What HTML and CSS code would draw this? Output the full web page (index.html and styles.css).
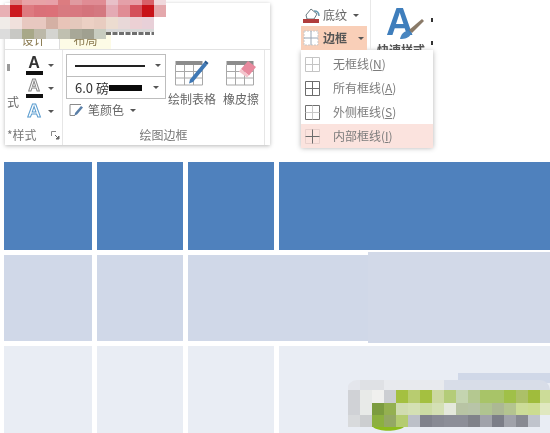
FILE: index.html
```html
<!DOCTYPE html>
<html lang="zh">
<head>
<meta charset="utf-8">
<title>内部框线</title>
<link rel="stylesheet" href="styles.css">
</head>
<body>
<div class="page">
  <header class="top">
    <section class="ribbon">
      <div class="tabs">
        <div class="tab tab-active">设计</div>
        <div class="tab tab-layout">布局</div>
      </div>
      <div class="ribbon-body">
        <div class="group group-style">
          <div class="group-top style-top">
            <div class="style-word"><i class="style-mark"></i><span>式</span></div>
            <div class="wordart">
              <div class="wa-row"><span class="wa-a"><span class="wa-letter">A</span><i class="wa-bar"></i></span><i class="caret"></i></div>
              <div class="wa-row"><span class="wa-a"><span class="wa-letter wa-outline">A</span><i class="wa-bar"></i></span><i class="caret"></i></div>
              <div class="wa-row"><span class="wa-a"><span class="wa-letter wa-glow">A</span></span><i class="caret"></i></div>
            </div>
          </div>
          <div class="group-label style-label">
            <span>*样式</span>
            <svg class="launcher" width="9" height="9" viewBox="0 0 9 9"><path d="M.5 5V.5H5" fill="none" stroke="#888"/><path d="M4 4l3 3M8 5v3H5z" stroke="#666" fill="#666"/></svg>
          </div>
        </div>
        <div class="group group-draw">
          <div class="group-top draw-top">
            <div class="line-col">
              <div class="line-box"><i class="line-thin"></i><i class="caret"></i></div>
              <div class="line-box line-box-2"><span class="pt">6.0 磅</span><i class="line-thick"></i><i class="caret"></i></div>
              <div class="pen-row">
                <svg width="16" height="14" viewBox="0 0 16 14"><path d="M6 12.500H1V1.500h11" fill="none" stroke="#8a8a8a"/><path d="M6 10l6-7 2 1.500-6 7-2.500 1z" fill="#5a7fa8"/></svg>
                <span>笔颜色</span><i class="caret"></i>
              </div>
            </div>
            <div class="tool tool-draw">
              <svg width="34" height="27" viewBox="0 0 34 27"><rect x=".5" y="2" width="27" height="4" fill="#8c8c8c"/><path d="M.5 6v20h27V6M.5 12.500h27M.5 19h27M9.500 6v20M18.500 6v20" fill="none" stroke="#a8a8a8"/><path d="M15 20.500L29 3.500l3 2.500-14 17-4 1.500z" fill="#3f78b5"/><path d="M29 3.500l1.500-2 3 2.500-1.500 2z" fill="#2a5a90"/></svg>
              <span>绘制表格</span>
            </div>
            <div class="tool tool-erase">
              <svg width="31" height="27" viewBox="0 0 31 27"><rect x=".5" y="2" width="27" height="4" fill="#8c8c8c"/><path d="M.5 6v20h27V6M.5 12.500h27M.5 19h27M9.500 6v20M18.500 6v20" fill="none" stroke="#a8a8a8"/><path d="M15 10l7-8 8 6-7 8.500z" fill="#e88a9e"/><path d="M15 10l8 6.500-2 2-8-6z" fill="#f4c4cc"/></svg>
              <span>橡皮擦</span>
            </div>
          </div>
          <div class="group-label">绘图边框</div>
        </div>
      </div>
    </section>
    <section class="side">
      <div class="side-top">
        <div class="side-left">
          <div class="shade-row">
            <svg width="17" height="18" viewBox="0 0 17 18"><path d="M3 9l5-6 6 5-3 5H4z" fill="#fff" stroke="#6a7a80"/><path d="M11 5c3 0 5 2 5 5" fill="none" stroke="#6a9ab0" stroke-width="1.500"/><rect y="13" width="16" height="4" fill="#b03c3c"/></svg>
            <span>底纹</span><i class="caret"></i>
          </div>
          <div class="border-row">
            <svg width="16" height="16" viewBox="0 0 16 16"><path d="M1 1h14v14H1z" fill="#fff" stroke="#c8c8c8" stroke-dasharray="2 1"/><path d="M8 1v14M1 8h14" stroke="#9aa6b4"/></svg>
            <b>边框</b><i class="caret"></i>
          </div>
        </div>
        <div class="quick">
          <div class="quick-icon">
            <span class="quick-a">A</span>
            <svg class="brush" width="26" height="22" viewBox="0 0 26 22"><path d="M1 21c1-5 4-8 8-8l3 3c-2 4-6 5-11 5z" fill="#4a86c0"/><path d="M10 12L23 1l2 2-12 12z" fill="#8a7a68"/></svg>
          </div>
          <div class="quick-label">快速样式</div>
        </div>
        <div class="dots"><i></i><i></i></div>
      </div>
      <ul class="menu">
        <li class="item">
          <svg width="15" height="15" viewBox="0 0 15 15"><path d="M.5.500h14v14H.5zM7.500.5v14M.5 7.500h14" fill="none" stroke="#c4c4c4"/></svg>
          <span>无框线(<u>N</u>)</span>
        </li>
        <li class="item">
          <svg width="15" height="15" viewBox="0 0 15 15"><path d="M.5.500h14v14H.5zM7.500.5v14M.5 7.500h14" fill="none" stroke="#6c6c6c"/></svg>
          <span>所有框线(<u>A</u>)</span>
        </li>
        <li class="item">
          <svg width="15" height="15" viewBox="0 0 15 15"><path d="M.5.500h14v14H.5z" fill="none" stroke="#707070"/><path d="M7.500.5v14M.5 7.500h14" fill="none" stroke="#c8c8c8"/></svg>
          <span>外侧框线(<u>S</u>)</span>
        </li>
        <li class="item item-on">
          <svg width="15" height="15" viewBox="0 0 15 15"><path d="M.5.500h14v14H.5z" fill="none" stroke="#e8d0cc"/><path d="M7.500.5v14M.5 7.500h14" fill="none" stroke="#6c6c6c"/></svg>
          <span>内部框线(<u>I</u>)</span>
        </li>
      </ul>
    </section>
  </header>

  <main class="sheet">
    <div class="cell head"></div><div class="cell head"></div><div class="cell head"></div><div class="cell head"></div>
    <div class="cell mid"></div><div class="cell mid"></div><div class="cell mid span2"></div>
    <div class="cell low"></div><div class="cell low"></div><div class="cell low"></div><div class="cell low"></div>
  </main>

  <div class="patch patch-mid"></div>
  <div class="patch patch-low"></div>

  <svg class="mosaic mosaic-top" width="170" height="42" viewBox="0 0 170 42">
    <rect x="10" y="0" width="12" height="5" fill="#e08a8a"/><rect x="22" y="0" width="24" height="5" fill="#e8a2a6"/><rect x="46" y="0" width="12" height="5" fill="#e8a0a8"/><rect x="58" y="0" width="12" height="5" fill="#dc7c80"/><rect x="70" y="0" width="12" height="5" fill="#e09aa0"/><rect x="82" y="0" width="24" height="5" fill="#e08c94"/><rect x="106" y="0" width="12" height="5" fill="#e8c0c8"/><rect x="118" y="0" width="12" height="5" fill="#e4a0a8"/><rect x="130" y="0" width="12" height="5" fill="#e8a0a8"/><rect x="142" y="0" width="12" height="5" fill="#d86068"/><rect x="154" y="0" width="12" height="5" fill="#f0d8dc"/>
    <rect x="0" y="5" width="10" height="12" fill="#e8b0b4"/><rect x="10" y="5" width="12" height="12" fill="#cc1a20"/><rect x="22" y="5" width="12" height="12" fill="#de7a80"/><rect x="34" y="5" width="12" height="12" fill="#da7078"/><rect x="46" y="5" width="12" height="12" fill="#dc7078"/><rect x="58" y="5" width="12" height="12" fill="#d87a80"/><rect x="70" y="5" width="12" height="12" fill="#d87880"/><rect x="82" y="5" width="12" height="12" fill="#d4747c"/><rect x="94" y="5" width="12" height="12" fill="#d47880"/><rect x="106" y="5" width="12" height="12" fill="#e4aab4"/><rect x="118" y="5" width="12" height="12" fill="#e08c94"/><rect x="130" y="5" width="12" height="12" fill="#d4505a"/><rect x="142" y="5" width="12" height="12" fill="#c81218"/><rect x="154" y="5" width="12" height="12" fill="#e4a8ac"/>
    <rect x="0" y="17" width="10" height="12" fill="#f0ece8"/><rect x="10" y="17" width="12" height="12" fill="#f0e0dc"/><rect x="22" y="17" width="24" height="12" fill="#e8c8c0"/><rect x="46" y="17" width="12" height="12" fill="#d4b0a4"/><rect x="58" y="17" width="12" height="12" fill="#e8c4b8"/><rect x="70" y="17" width="12" height="12" fill="#e4c8bc"/><rect x="82" y="17" width="12" height="12" fill="#ecd0c4"/><rect x="94" y="17" width="12" height="12" fill="#e8ccc0"/><rect x="106" y="17" width="12" height="12" fill="#ecdcd0"/><rect x="118" y="17" width="12" height="12" fill="#e8d8d8"/><rect x="130" y="17" width="12" height="12" fill="#ecd0d4"/><rect x="142" y="17" width="12" height="12" fill="#e8d0d8"/>
    <rect x="0" y="29" width="10" height="10" fill="#dcdcdc"/><rect x="10" y="29" width="12" height="10" fill="#c8c8c4"/><rect x="22" y="29" width="12" height="10" fill="#a8a888"/><rect x="34" y="29" width="12" height="10" fill="#bcb8a8"/><rect x="46" y="29" width="12" height="10" fill="#d4d4d0"/><rect x="58" y="29" width="12" height="10" fill="#c0c0b0"/><rect x="70" y="29" width="12" height="10" fill="#a8a898"/><rect x="82" y="29" width="12" height="10" fill="#a0a090"/><rect x="94" y="29" width="12" height="10" fill="#c8ccc0"/><rect x="106" y="29" width="48" height="3" fill="#d8d8d8"/>
    <path d="M106 33.500h48" stroke="#333" stroke-width="3" stroke-dasharray="5 1.500" opacity=".7"/>
  </svg>

  <svg class="mosaic mosaic-low" width="203" height="53" viewBox="0 0 203 53">
    <rect x="1" y="0" width="12" height="10" fill="#e4e6ec"/><rect x="13" y="0" width="24" height="10" fill="#dfe1e5"/><rect x="37" y="0" width="60" height="10" fill="#e8eaee"/><rect x="97" y="0" width="106" height="10" fill="#d8dde8"/>
    <rect x="1" y="10" width="12" height="13" fill="#d0d2d6"/><rect x="13" y="10" width="12" height="13" fill="#e8eae8"/><rect x="25" y="10" width="12" height="13" fill="#f0f0ee"/><rect x="37" y="10" width="12" height="13" fill="#ccced2"/><rect x="49" y="10" width="12" height="13" fill="#a4c040"/><rect x="61" y="10" width="12" height="13" fill="#b8cc70"/><rect x="73" y="10" width="12" height="13" fill="#a4c040"/><rect x="85" y="10" width="12" height="13" fill="#ccd8a0"/><rect x="97" y="10" width="12" height="13" fill="#b4cc78"/><rect x="109" y="10" width="12" height="13" fill="#c4d4b0"/><rect x="121" y="10" width="12" height="13" fill="#b4c890"/><rect x="133" y="10" width="24" height="13" fill="#a8c468"/><rect x="157" y="10" width="12" height="13" fill="#a0c048"/><rect x="169" y="10" width="12" height="13" fill="#acc068"/><rect x="181" y="10" width="12" height="13" fill="#a0bc3c"/><rect x="193" y="10" width="10" height="13" fill="#ccdc98"/>
    <rect x="1" y="23" width="12" height="12" fill="#d0d2d6"/><rect x="13" y="23" width="12" height="12" fill="#e8eae8"/><rect x="25" y="23" width="12" height="12" fill="#7c9c40"/><rect x="37" y="23" width="12" height="12" fill="#94b050"/><rect x="49" y="23" width="12" height="12" fill="#d0dcb0"/><rect x="61" y="23" width="12" height="12" fill="#d4e0b4"/><rect x="73" y="23" width="12" height="12" fill="#ccdca4"/><rect x="85" y="23" width="12" height="12" fill="#d4e0b4"/><rect x="97" y="23" width="12" height="12" fill="#e4e8dc"/><rect x="109" y="23" width="12" height="12" fill="#b8c4a4"/><rect x="121" y="23" width="12" height="12" fill="#b8c4a8"/><rect x="133" y="23" width="12" height="12" fill="#b0c490"/><rect x="145" y="23" width="12" height="12" fill="#acb894"/><rect x="157" y="23" width="12" height="12" fill="#b4c490"/><rect x="169" y="23" width="12" height="12" fill="#ccdc98"/><rect x="181" y="23" width="12" height="12" fill="#ccdc90"/><rect x="193" y="23" width="10" height="12" fill="#e0e8c0"/>
    <rect x="1" y="35" width="12" height="12" fill="#d8dadc"/><rect x="13" y="35" width="12" height="12" fill="#ccced0"/><rect x="25" y="35" width="12" height="12" fill="#8cb040"/><rect x="37" y="35" width="12" height="12" fill="#94a864"/><rect x="49" y="35" width="12" height="12" fill="#b4cc70"/><rect x="61" y="35" width="12" height="12" fill="#bcc0c8"/><rect x="73" y="35" width="12" height="12" fill="#80828c"/><rect x="85" y="35" width="12" height="12" fill="#888a94"/><rect x="97" y="35" width="12" height="12" fill="#8c8e98"/><rect x="109" y="35" width="12" height="12" fill="#8c8e98"/><rect x="121" y="35" width="12" height="12" fill="#80828a"/><rect x="133" y="35" width="12" height="12" fill="#a0a2aa"/><rect x="145" y="35" width="12" height="12" fill="#7c7e88"/><rect x="157" y="35" width="12" height="12" fill="#a0a2aa"/><rect x="169" y="35" width="12" height="12" fill="#888a92"/><rect x="181" y="35" width="12" height="12" fill="#c0c4cc"/>
    <path d="M26 47c6 5 24 5 31 0z" fill="#8cbc1c"/>
  </svg>
</div>
</body>
</html>
```

FILE: styles.css
```css
* { box-sizing: border-box; }
html, body { margin: 0; padding: 0; background: #fff; }
.page {
  position: relative;
  width: 550px;
  height: 433px;
  overflow: hidden;
  font: 12px/1.2 "Noto Sans CJK SC", "Liberation Sans", sans-serif;
  color: #666;
}
i { display: block; font-style: normal; }
.caret {
  width: 0; height: 0;
  border: 3px solid transparent;
  border-top: 3px solid #555;
  border-bottom: 0;
  flex: none;
}

/* top strip */
.top { display: flex; height: 162px; align-items: flex-start; padding-left: 5px; }
.ribbon {
  width: 265px; height: 142px; margin-top: 3px;
  background: #fff;
  box-shadow: 0 1px 4px rgba(0,0,0,.28);
  display: flex; flex-direction: column;
}
.tabs { height: 47px; display: flex; align-items: flex-end; padding-left: 3px; border-bottom: 1px solid #e2e2e2; flex: none; filter: blur(.5px); }
.tab { height: 18px; text-align: center; line-height: 18px; color: #8a7a50; }
.tab-active { width: 51px; }
.tab-layout { width: 52px; background: #fdfbe6; border-left: 1px solid #ddd; }
.ribbon-body { display: flex; flex: 1; filter: blur(.4px); }
.group { display: flex; flex-direction: column; }
.group-top { height: 78px; display: flex; }
.group-label { height: 14px; line-height: 14px; text-align: center; color: #777; }

.group-style { width: 57px; }
.style-top { padding-top: 6px; }
.style-word { width: 20px; padding-left: 2px; color: #666; }
.style-mark { width: 3px; height: 7px; background: #999; margin: 8px 0 24px; }
.wordart { display: flex; flex-direction: column; }
.wa-row { height: 23px; display: flex; align-items: flex-start; gap: 5px; }
.wa-row .caret { margin-top: 8px; }
.wa-a { width: 18px; height: 20px; display: flex; flex-direction: column; align-items: center; }
.wa-letter { font: bold 16px/14px "Liberation Sans", sans-serif; color: #333; }
.wa-outline { color: #fff; -webkit-text-stroke: 1px #888; }
.wa-glow { font-size: 19px; line-height: 18px; color: #fff; -webkit-text-stroke: 1px #5a9ccf; }
.wa-bar { width: 17px; height: 4px; background: #111; margin-top: 1px; }
.style-label { display: flex; justify-content: space-between; align-items: center; padding: 0 2px 0 2px; }
.launcher { flex: none; }

.group-draw { width: 203px; border-left: 1px solid #e6e6e6; border-right: 1px solid #e6e6e6; }
.draw-top { padding: 4px 0 0 3px; }
.line-col { width: 100px; display: flex; flex-direction: column; }
.line-box { height: 23px; border: 1px solid #bdbdbd; display: flex; align-items: center; padding: 0 4px 0 8px; gap: 6px; }
.line-box-2 { height: 23px; margin-top: -1px; }
.line-thin { flex: 1; height: 2px; background: #222; }
.pt { color: #333; font-size: 13px; white-space: nowrap; }
.line-thick { width: 33px; height: 6px; background: #0a0a0a; margin-left: -6px; margin-right: 1px; }
.line-box .caret { margin-left: 4px; }
.pen-row { display: flex; align-items: center; gap: 3px; padding: 4px 0 0 3px; color: #666; }
.pen-row .caret { margin-left: 3px; }
.tool { display: flex; flex-direction: column; align-items: center; white-space: nowrap; color: #666; }
.tool span { margin-top: 6px; }
.tool svg { margin-top: 5px; }
.tool-draw { width: 50px; margin-left: 1px; }
.tool-erase { width: 38px; margin-left: 5px; }

/* right strip */
.side { width: 134px; margin-left: 30px; position: relative; filter: blur(.4px); }
.side-top { height: 50px; display: flex; overflow: hidden; padding-left: 1px; }
.side-left { width: 66px; padding-top: 4px; flex: none; }
.shade-row { height: 22px; display: flex; align-items: center; gap: 3px; padding-left: 2px; }
.shade-row .caret { margin-left: 3px; }
.border-row { height: 24px; background: #f9cfb8; display: flex; align-items: center; gap: 4px; padding-left: 2px; }
.border-row b { font-weight: 700; color: #555; }
.border-row .caret { margin-left: 7px; }
.quick { width: 63px; margin-left: 3px; border-left: 1px solid #e8e8e8; padding: 6px 0 0 6px; flex: none; position: relative; }
.quick-icon { height: 32px; padding-left: 9px; position: relative; }
.quick-a { font: bold 38px/32px "Liberation Sans", sans-serif; color: #3f7ebc; }
.brush { position: absolute; left: 22px; top: 12px; }
.quick-label { margin-top: 5px; white-space: nowrap; font-weight: 700; color: #555; }
.dots { display: flex; flex-direction: column; gap: 19px; padding-top: 18px; margin-left: -2px; }
.dots i { width: 2px; height: 4px; background: #333; }

.menu {
  list-style: none; margin: 0; padding: 2px 0 0;
  height: 97px; width: 132px; margin-left: 1px;
  background: #fff;
  box-shadow: 0 1px 5px rgba(0,0,0,.3);
}
.item { height: 24px; display: flex; align-items: center; padding-left: 4px; gap: 13px; color: #7c7c7c; }
.item-on { background: #fbe3de; }

/* slide table */
.sheet {
  display: grid;
  grid-template-columns: 88px 86px 86px 1fr;
  grid-template-rows: 88px 86px 87px;
  gap: 5px;
  padding-left: 4px;
}
.cell { min-width: 0; }
.head { background: #4f81bd; }
.mid { background: #d0d8e8; }
.low { background: #e9edf4; }
.span2 { grid-column: span 2; }

/* overlays */
.patch { position: absolute; }
.patch-mid { left: 368px; top: 252px; width: 182px; height: 91px; background: #d2d9e8; }
.patch-low { left: 458px; top: 373px; width: 92px; height: 10px; background: #d0d8e8; }
.mosaic { position: absolute; display: block; }
.mosaic-top { left: 0; top: 0; filter: blur(.4px); }
.mosaic-low { left: 347px; top: 380px; filter: blur(.5px); border-radius: 10px; }
```
